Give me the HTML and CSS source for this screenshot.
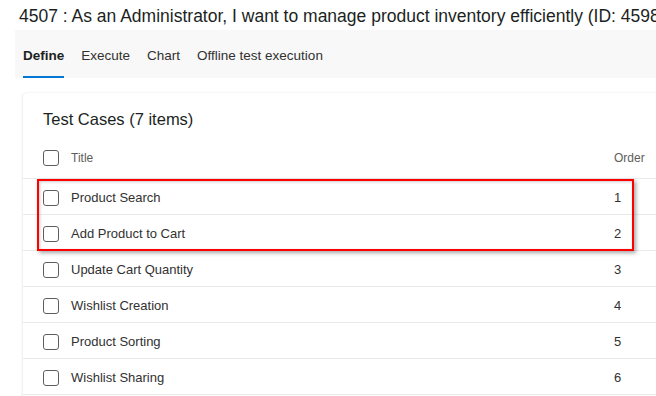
FILE: index.html
```html
<!DOCTYPE html>
<html>
<head lang="en">
    <meta charset="UTF-8">
    <title>Test plan</title>
    <link rel="stylesheet" href="styles.css">
</head>
<body>
<div class="page">
    <h1 class="title">4507 : As an Administrator, I want to manage product inventory efficiently (ID: 4598)</h1>

    <!--tabs-->
    <div class="tabs">
        <span class="tab active">Define</span>
        <span class="tab">Execute</span>
        <span class="tab">Chart</span>
        <span class="tab">Offline test execution</span>
    </div>

    <div class="card">
        <h2 class="card-title">Test Cases (7 items)</h2>
        <div class="row head">
            <span class="check"></span>
            <span class="name">Title</span>
            <span class="order">Order</span>
        </div>
        <div class="rows">
            <div class="row"><span class="check"></span><span class="name">Product Search</span><span class="order">1</span></div>
            <div class="row"><span class="check"></span><span class="name">Add Product to Cart</span><span class="order">2</span></div>
            <div class="row"><span class="check"></span><span class="name">Update Cart Quantity</span><span class="order">3</span></div>
            <div class="row"><span class="check"></span><span class="name">Wishlist Creation</span><span class="order">4</span></div>
            <div class="row"><span class="check"></span><span class="name">Product Sorting</span><span class="order">5</span></div>
            <div class="row"><span class="check"></span><span class="name">Wishlist Sharing</span><span class="order">6</span></div>
            <!--highlight box over first two rows-->
            <div class="highlight"></div>
        </div>
    </div>
</div>
</body>
</html>
```

FILE: styles.css
```css
*{
    margin:0;
    padding:0;
    box-sizing:border-box;
}
body{
    font-family:"Liberation Sans", Arial, sans-serif;
    color:#323130;
    background:#fff;
    width:656px;
    height:396px;
    overflow:hidden;
}
.page{
    width:656px;
    height:396px;
    overflow:hidden;
}
.title{
    font-size:17.5px;
    font-weight:normal;
    line-height:22px;
    color:#201f1e;
    padding:5px 0 3px 19px;
    white-space:nowrap;
    overflow:hidden;
}
.tabs{
    margin-left:15px;
    height:48px;
    padding-left:8px;
    background-color:#f8f8f8;
    display:flex;
    gap:17px;
}
.tab{
    font-size:13.5px;
    height:48px;
    display:flex;
    align-items:center;
    padding-top:5px;
    border-bottom:2px solid transparent;
    color:#323130;
}
.tab.active{
    font-weight:bold;
    color:#201f1e;
    border-bottom-color:#0078d4;
}
.card{
    margin:15px 0 0 23px;
    width:700px;
    height:320px;
    background:#fff;
    border-radius:4px;
    box-shadow:0 1.6px 3.6px rgba(0,0,0,.12), 0 0.3px 0.9px rgba(0,0,0,.1);
    padding-top:14px;
}
.card-title{
    font-size:16.5px;
    font-weight:normal;
    line-height:24px;
    color:#201f1e;
    padding-left:20px;
}
.row{
    display:flex;
    align-items:center;
    height:36px;
    padding-left:20px;
    padding-top:2px;
    border-bottom:1px solid #eaeaea;
    font-size:13px;
}
.row.head{
    height:48px;
    padding-top:9px;
    padding-bottom:3px;
    font-size:12px;
    color:#605e5c;
}
.check{
    width:16px;
    height:16px;
    border:1px solid #605e5c;
    border-radius:3px;
    flex:none;
}
.name{
    width:543px;
    margin-left:12px;
    flex:none;
}
.rows{
    position:relative;
}
.highlight{
    position:absolute;
    left:14px;
    top:0;
    width:597px;
    height:72px;
    border:2px solid #f00;
    box-shadow:2px 2px 4px rgba(0,0,0,.35), inset 1px 1px 3px rgba(0,0,0,.2);
}
```
